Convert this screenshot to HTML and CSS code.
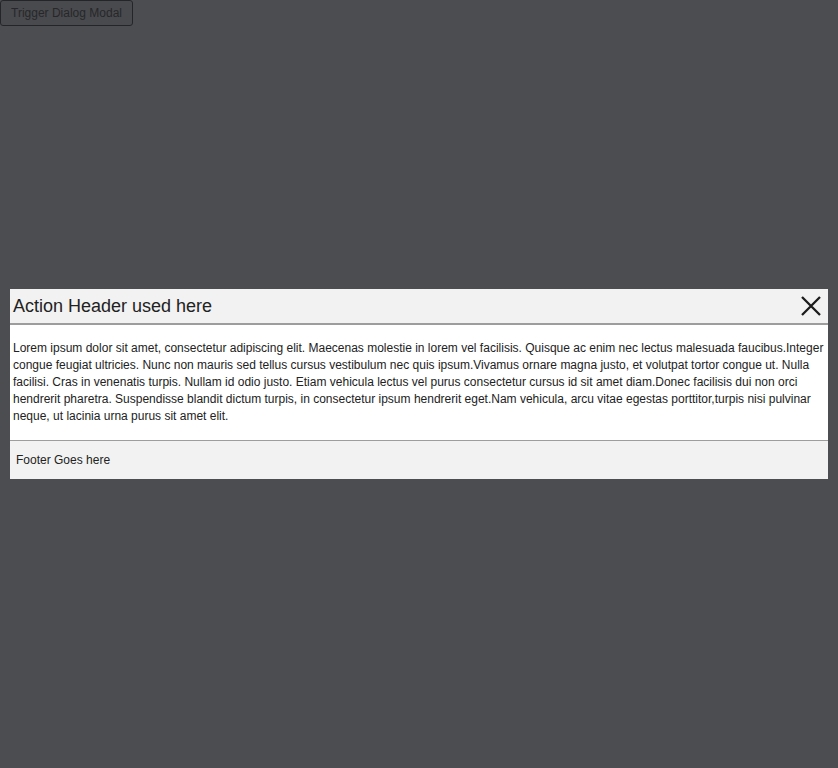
FILE: index.html
```html
<!DOCTYPE html>
<html>
<head>
<meta charset="utf-8">
<link rel="stylesheet" href="styles.css">
</head>
<body>
<button class="trigger">Trigger Dialog Modal</button>
<div class="overlay">
  <div class="dialog">
    <div class="dialog-header">
      <span class="dialog-title">Action Header used here</span>
      <span class="close" aria-label="close">
        <svg width="22" height="22" viewBox="0 0 22 22"><path d="M2 2 L20 20 M20 2 L2 20" stroke="#1c1c1c" stroke-width="2.3" fill="none"/></svg>
      </span>
    </div>
    <div class="dialog-body">Lorem ipsum dolor sit amet, consectetur adipiscing elit. Maecenas molestie in lorem vel facilisis. Quisque ac enim nec lectus malesuada faucibus.Integer congue feugiat ultricies. Nunc non mauris sed tellus cursus vestibulum nec quis ipsum.Vivamus ornare magna justo, et volutpat tortor congue ut. Nulla facilisi. Cras in venenatis turpis. Nullam id odio justo. Etiam vehicula lectus vel purus consectetur cursus id sit amet diam.Donec facilisis dui non orci hendrerit pharetra. Suspendisse blandit dictum turpis, in consectetur ipsum hendrerit eget.Nam vehicula, arcu vitae egestas porttitor,turpis nisi pulvinar neque, ut lacinia urna purus sit amet elit.</div>
    <div class="dialog-footer">Footer Goes here</div>
  </div>
</div>
</body>
</html>
```
FILE: styles.css
```css
html, body {
  margin: 0;
  padding: 0;
  background: #ffffff;
  font-family: "Liberation Sans", Arial, sans-serif;
}
.trigger {
  display: block;
  margin: 0;
  height: 26px;
  width: 133px;
  padding: 0;
  font-family: "Liberation Sans", Arial, sans-serif;
  font-size: 12px;
  color: #7e7e7e;
  background: #f4f4f4;
  border: 1px solid #767676;
  border-radius: 3px;
}
.overlay {
  position: fixed;
  inset: 0;
  background: rgba(3, 4, 8, 0.71);
  display: flex;
  align-items: center;
  padding: 0 10px;
}
.dialog {
  flex: 1;
  background: #ffffff;
  color: #333;
}
.dialog-header {
  height: 34px;
  background: #f2f2f2;
  border-bottom: 2px solid #9d9d9d;
  display: flex;
  align-items: center;
  justify-content: space-between;
  padding: 0 6px 0 3px;
}
.dialog-title {
  font-size: 18px;
  color: #222;
}
.close {
  display: flex;
  width: 22px;
  height: 22px;
}
.dialog-body {
  font-size: 12px;
  line-height: 17px;
  padding: 15px 4px 15px 3px;
  color: #222;
}
.dialog-footer {
  height: 38px;
  border-top: 1px solid #9d9d9d;
  background: #f2f2f2;
  font-size: 12px;
  display: flex;
  align-items: center;
  padding: 0 6px;
  color: #222;
}
```
